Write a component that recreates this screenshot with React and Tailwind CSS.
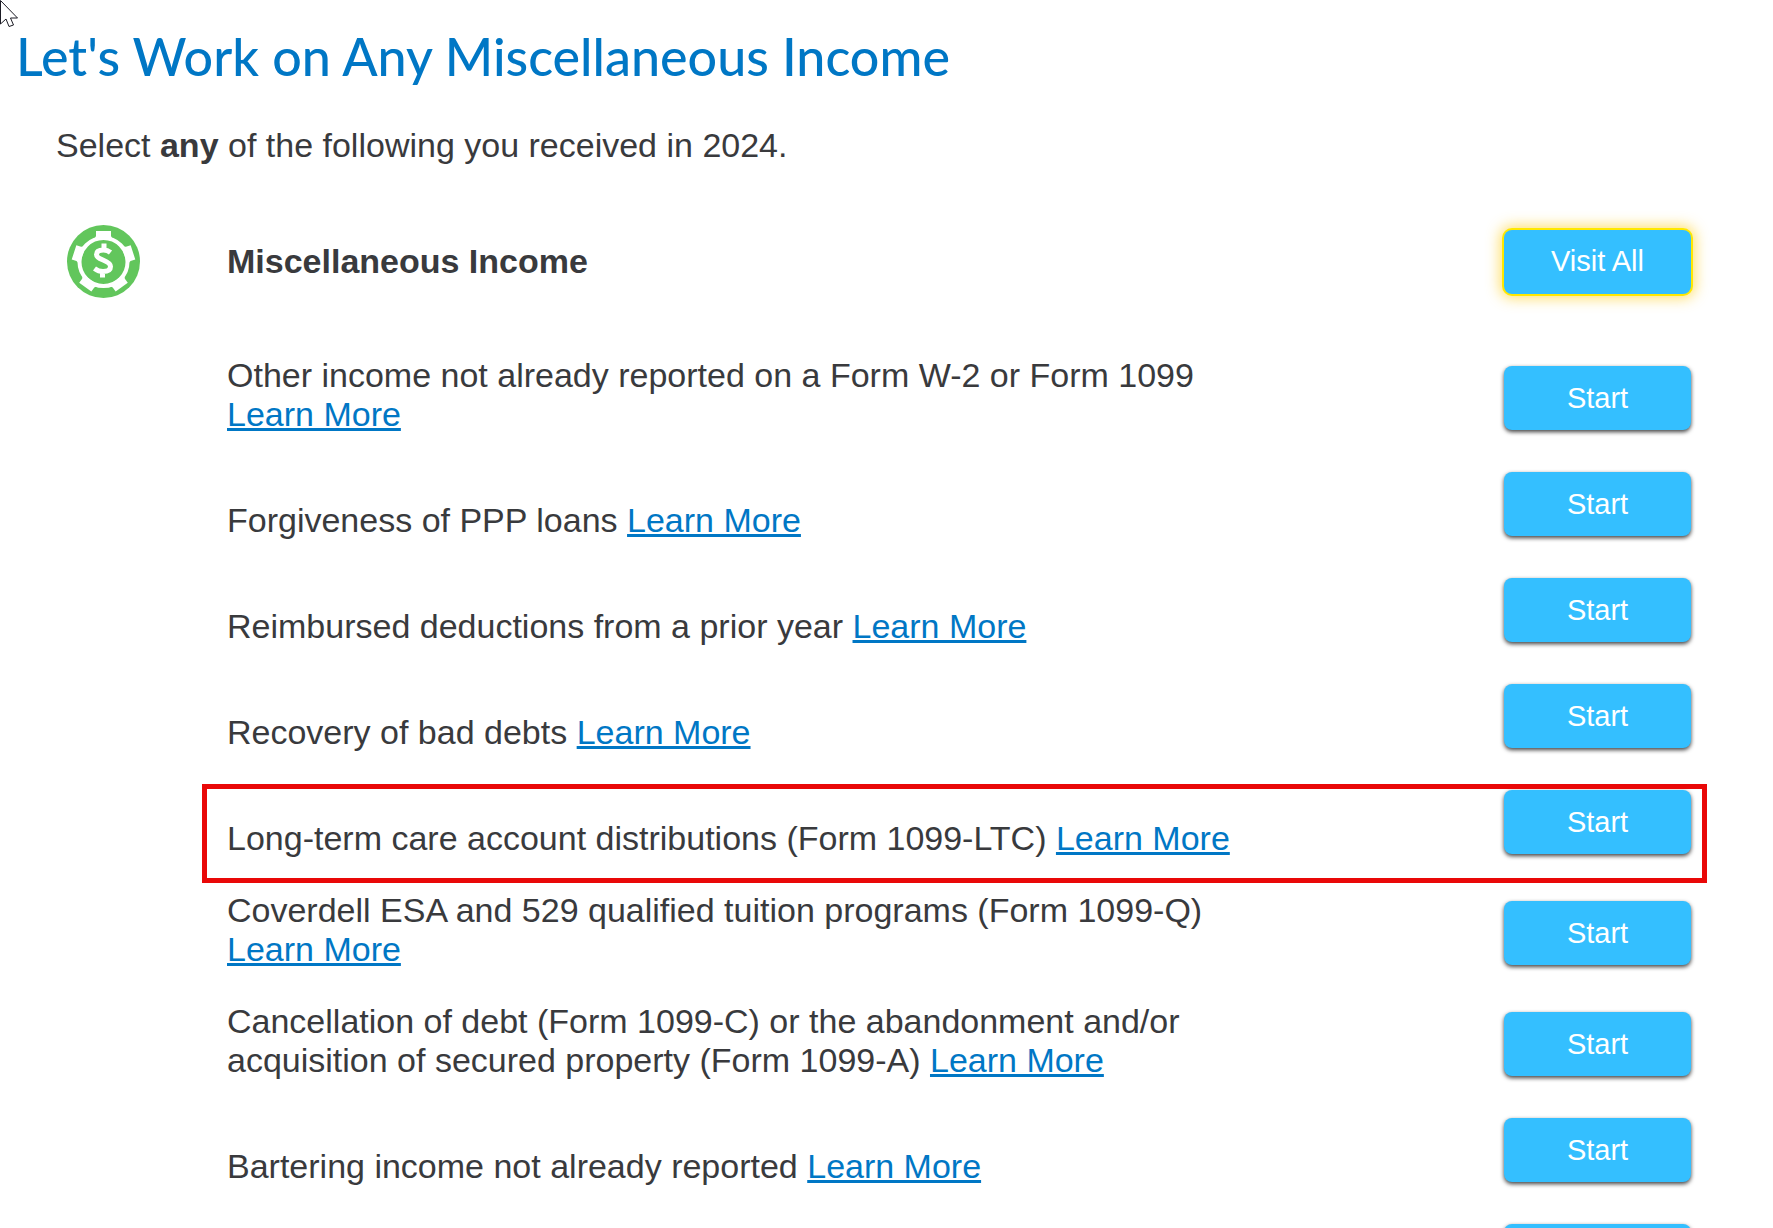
import React from 'react';

const incomeTypes = [
    { id: 'other', text: 'Other income not already reported on a Form W-2 or Form 1099' },
    { id: 'ppp', text: 'Forgiveness of PPP loans' },
    { id: 'reimbursed', text: 'Reimbursed deductions from a prior year' },
    { id: 'bad-debts', text: 'Recovery of bad debts' },
    { id: 'ltc', text: 'Long-term care account distributions (Form 1099-LTC)', highlighted: true },
    { id: 'coverdell', text: 'Coverdell ESA and 529 qualified tuition programs (Form 1099-Q)' },
    {
        id: 'cancellation',
        text: 'Cancellation of debt (Form 1099-C) or the abandonment and/or acquisition of secured property (Form 1099-A)',
    },
    { id: 'bartering', text: 'Bartering income not already reported' },
    { id: 'more', text: '' },
];

function Cursor() {
    return (
        <svg className="absolute left-0 top-0" width="20" height="28" viewBox="0 0 20 28" aria-hidden="true">
            <path
                d="M0.5 0.5V24L6 19L9 26.5L13.5 25L10.5 18H17.5Z"
                fill="#fff"
                stroke="#1b1b24"
                strokeWidth="1"
            />
        </svg>
    );
}

function MoneyIcon() {
    return (
        <svg width="73" height="73" viewBox="0 0 73 73" aria-hidden="true">
            <circle cx="36.5" cy="36.5" r="36.5" fill="#62c65c" />
            <circle cx="36.5" cy="37" r="24" fill="none" stroke="#fff" strokeWidth="4" />
            {/* notches round the rim */}
            {[0, 72, 144, 216, 288].map((angle) => (
                <path
                    key={angle}
                    transform={`rotate(${angle} 36.5 37)`}
                    d="M29 6H44V11L46 15H27L29 11Z"
                    fill="#fff"
                />
            ))}
            <path
                d="M43.5 27.5Q40.5 25 36.5 25Q29.5 25 29.5 29.5Q29.5 32.5 36 35Q43.5 38 43.5 41.5Q43.5 46.5 36 46.5Q31.5 46.5 27.5 43.5M37 18.5V25M35.5 46V52.5"
                fill="none"
                stroke="#fff"
                strokeWidth="5"
            />
        </svg>
    );
}

function IncomeRow({ item }) {
    return (
        <li className="relative flex min-h-[73px] items-end justify-between">
            <p className="max-w-[1040px]">
                {item.text}{' '}
                {item.text && (
                    <a href="#learn-more" className="whitespace-nowrap text-[#0077c5] underline">
                        Learn More
                    </a>
                )}
            </p>
            <button
                type="button"
                className="mb-1 h-16 w-[187px] shrink-0 rounded-lg bg-[#34bfff] text-[29px] text-white shadow-[0_2px_4px_rgba(0,0,0,0.75)]"
            >
                Start
            </button>
            {item.highlighted && (
                <div className="pointer-events-none absolute -bottom-[25px] -left-[25px] -right-4 -top-px border-[5px] border-[#e90808]" />
            )}
        </li>
    );
}

function App() {
    return (
        <div className="h-screen overflow-hidden bg-white font-['Liberation_Sans',Arial,sans-serif] text-[34px] leading-[39px] text-[#393a3d]">
            <Cursor />
            <main className="pl-4 pr-[82px] pt-[26px]">
                <h1 className="font-['Lato',sans-serif] text-[52px] font-medium leading-[60px] text-[#0077c5]">
                    Let's Work on Any Miscellaneous Income
                </h1>

                <div className="pl-10 pt-10">
                    <p>
                        Select <b>any</b> of the following you received in 2024.
                    </p>

                    <section className="pt-[60px]">
                        <div className="flex items-center pl-[11px]">
                            <MoneyIcon />
                            <h2 className="flex-1 pl-[87px] font-bold">Miscellaneous Income</h2>
                            <button
                                type="button"
                                className="h-16 w-[187px] rounded-lg bg-[#34bfff] text-[29px] text-white shadow-[0_0_0_2px_#ffe800,0_0_14px_4px_rgba(255,208,40,0.7)]"
                            >
                                Visit All
                            </button>
                        </div>

                        <ul className="flex flex-col gap-[33px] pl-[171px] pt-[58px]">
                            {incomeTypes.map((item) => (
                                <IncomeRow key={item.id} item={item} />
                            ))}
                        </ul>
                    </section>
                </div>
            </main>
        </div>
    );
}

export default App;
